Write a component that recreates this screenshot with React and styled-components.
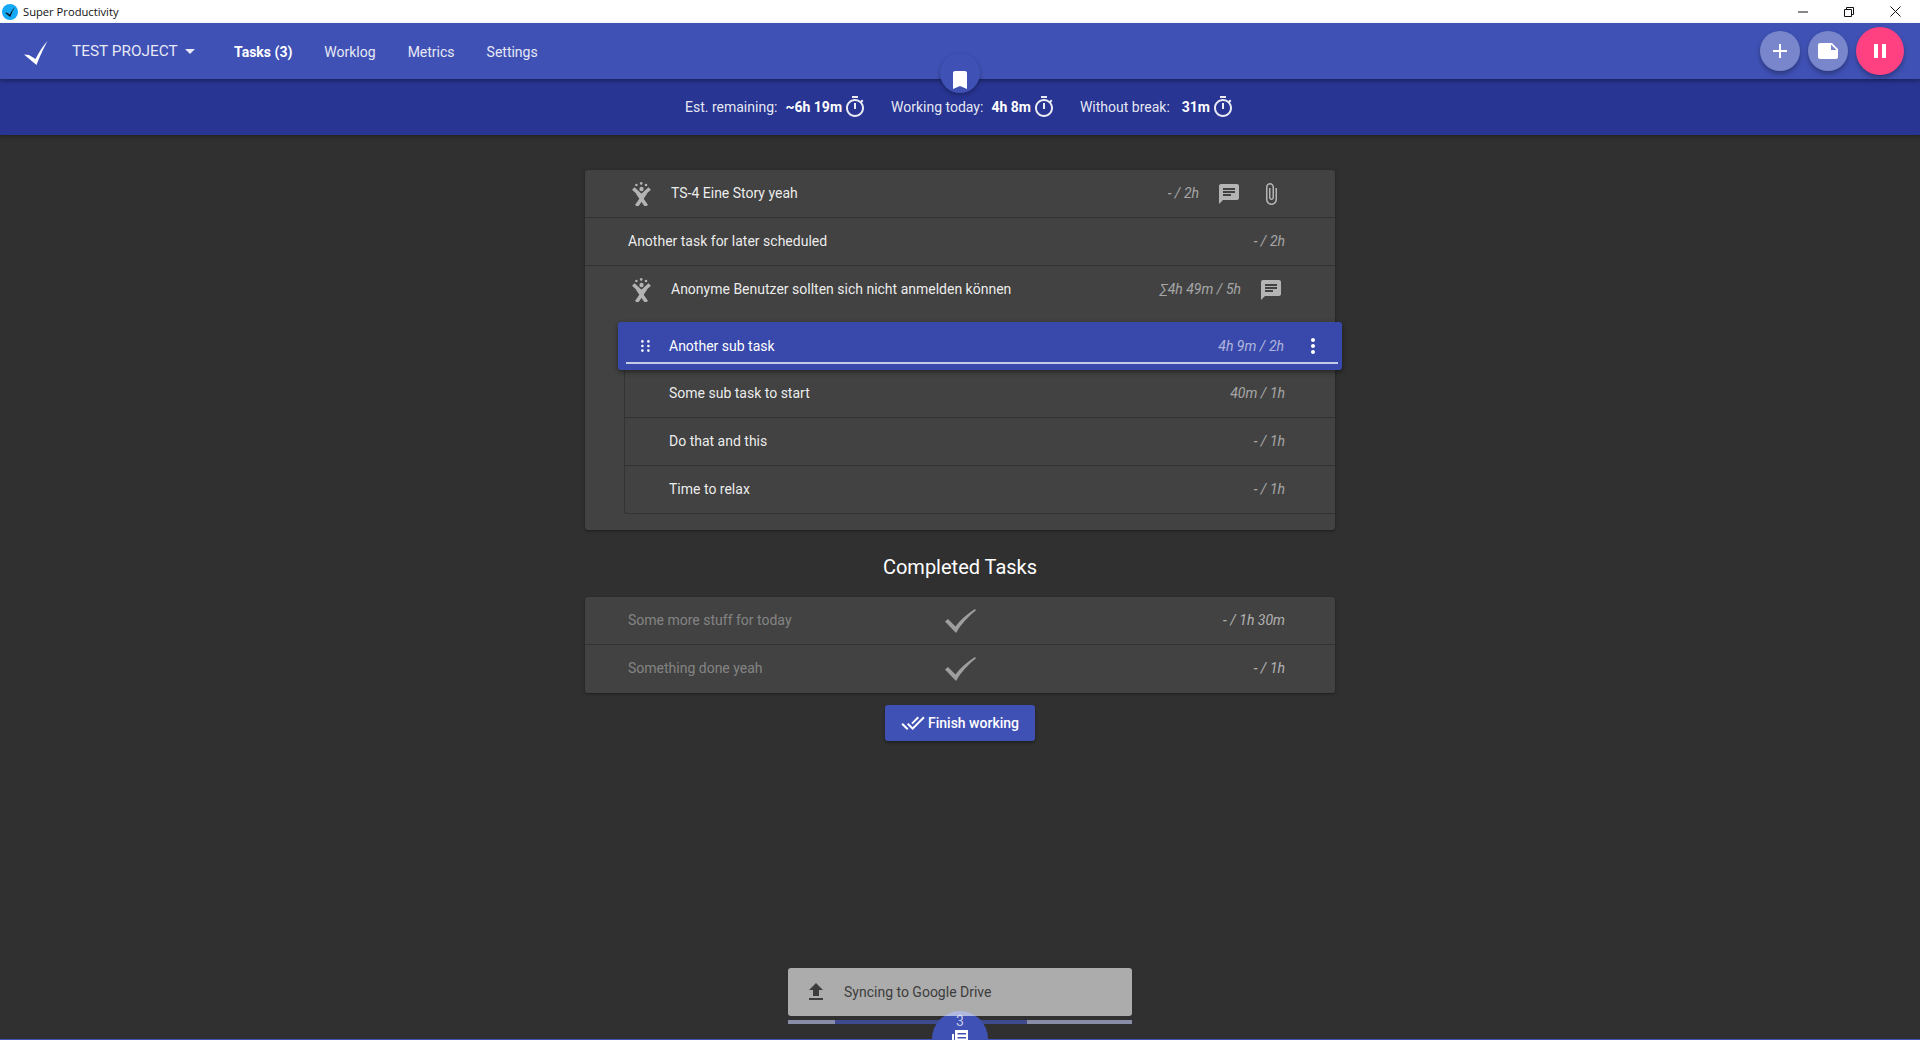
import styled, { createGlobalStyle } from 'styled-components';

const GlobalStyle = createGlobalStyle`
  html, body {
    margin: 0;
    padding: 0;
    height: 100%;
    background: #303030;
    overflow: hidden;
  }
  body {
    font-family: Roboto, "Liberation Sans", Arial, sans-serif;
    font-size: 14px;
    color: #fff;
  }
  * { box-sizing: border-box; }
`;

const paths = {
  add: 'M19 13h-6v6h-2v-6H5v-2h6V5h2v6h6v2z',
  note: 'M22 10l-6-6H4c-1.1 0-2 .9-2 2v12.01c0 1.1.9 1.99 2 1.99l16-.01c1.1 0 2-.89 2-1.99v-8zm-7-4.5l5.5 5.5H15V5.5z',
  pause: 'M6 19h4V5H6v14zm8-14v14h4V5h-4z',
  bookmark: 'M17 3H7c-1.1 0-1.99.9-1.99 2L5 21l7-3 7 3V5c0-1.1-.9-2-2-2z',
  timer: 'M15 1H9v2h6V1zm-4 13h2V8h-2v6zm8.03-6.61l1.42-1.42c-.43-.51-.9-.99-1.41-1.41l-1.42 1.42C16.07 4.74 14.12 4 12 4c-4.97 0-9 4.03-9 9s4.02 9 9 9 9-4.03 9-9c0-2.12-.74-4.07-1.97-5.61zM12 20c-3.87 0-7-3.13-7-7s3.13-7 7-7 7 3.13 7 7-3.13 7-7 7z',
  chat: 'M20 2H4c-1.1 0-1.99.9-1.99 2L2 22l4-4h14c1.1 0 2-.9 2-2V4c0-1.1-.9-2-2-2zM6 9h12v2H6V9zm8 5H6v-2h8v2zm4-6H6V6h12v2z',
  attach: 'M16.5 6v11.5c0 2.21-1.79 4-4 4s-4-1.79-4-4V5c0-1.38 1.12-2.5 2.5-2.5s2.5 1.12 2.5 2.5v10.5c0 .55-.45 1-1 1s-1-.45-1-1V6H10v9.5c0 1.38 1.12 2.5 2.5 2.5s2.5-1.12 2.5-2.5V5c0-2.21-1.79-4-4-4S7 2.79 7 5v12.5c0 3.04 2.46 5.5 5.5 5.5s5.5-2.46 5.5-5.5V6h-1.5z',
  more: 'M12 8c1.1 0 2-.9 2-2s-.9-2-2-2-2 .9-2 2 .9 2 2 2zm0 2c-1.1 0-2 .9-2 2s.9 2 2 2 2-.9 2-2-.9-2-2-2zm0 6c-1.1 0-2 .9-2 2s.9 2 2 2 2-.9 2-2-.9-2-2-2z',
  upload: 'M9 16h6v-6h4l-7-7-7 7h4v6zm-4 2h14v2H5z',
  doneAll: 'M18 7l-1.41-1.41-6.34 6.34 1.41 1.41L18 7zm4.24-1.41L11.66 16.17 7.48 12l-1.41 1.41L11.66 19l12-12-1.42-1.41zM.41 13.41L6 19l1.41-1.41L1.83 12 .41 13.41z',
  caret: 'M7 10l5 5 5-5z',
};

const Drawing = styled.svg`
  display: block;
  flex: none;
`;

const Icon = ({ name, size = 24 }) => (
  <Drawing width={size} height={size} viewBox="0 0 24 24" fill="currentColor">
    <path d={paths[name]} />
  </Drawing>
);

// the thin hand drawn tick of the app logo
const Tick = ({ size, color }) => (
  <Drawing width={size} height={size} viewBox="0 0 24 24" fill={color}>
    <path d="M0 13.5 L5 14 L11.5 18 C14.5 12 18.5 5.5 23.5 0 C19.5 7.5 15.5 15.5 12.5 24 Z" />
  </Drawing>
);

const DoneTick = () => (
  <Drawing width="31" height="24" viewBox="0 0 31 24" fill="#9e9e9e">
    <path d="M0 12.5 L3 10 L10.5 17.5 C15 11 22 5 30 0 L31 1.2 C23 7.5 16 15 11 24 Z" />
  </Drawing>
);

const JiraIcon = () => (
  <Drawing width="19" height="24" viewBox="0 0 19 24">
    <g fill="#b4b4b4">
      <circle cx="4.4" cy="3" r="1.3" />
      <circle cx="9.2" cy="1.4" r="1.3" />
      <circle cx="14" cy="3" r="1.3" />
      <circle cx="9.5" cy="7" r="2.2" />
    </g>
    <g fill="none" stroke="#b4b4b4" strokeWidth="3.6">
      <path d="M1.3 6.5 L9.5 14 L17.7 6.5" />
      <path d="M5.6 11 L14.5 24" />
      <path d="M13.4 11 L4.5 24" />
    </g>
  </Drawing>
);

const GripIcon = () => (
  <Drawing width="9" height="12" viewBox="0 0 9 12" fill="#fff">
    <circle cx="1.4" cy="1.4" r="1.3" />
    <circle cx="7.4" cy="1.4" r="1.3" />
    <circle cx="1.4" cy="6" r="1.3" />
    <circle cx="7.4" cy="6" r="1.3" />
    <circle cx="1.4" cy="10.6" r="1.3" />
    <circle cx="7.4" cy="10.6" r="1.3" />
  </Drawing>
);

const BacklogIcon = () => (
  <Drawing width="17" height="11" viewBox="0 0 17 11" fill="#fff">
    <path d="M0 4h2v7H0z" />
    <path fillRule="evenodd" d="M3 0h13v11H3zM5.5 3v1.6h8.5V3zM5.5 7v1.6h8.5V7z" />
  </Drawing>
);

const Page = styled.div`
  position: relative;
  height: 100vh;
  display: flex;
  flex-direction: column;
  overflow: hidden;
`;

const TitleBar = styled.div`
  height: 23px;
  flex: none;
  background: #fff;
  color: #111;
  display: flex;
  align-items: center;
  padding: 0 2px;
  font-family: "Open Sans", sans-serif;
  font-size: 11.2px;
`;

const AppDot = styled.span`
  width: 16px;
  height: 16px;
  border-radius: 50%;
  background: #14a8f5;
  display: flex;
  align-items: center;
  justify-content: center;
  margin-right: 5px;
`;

const WindowButtons = styled.div`
  margin-left: auto;
  display: flex;
`;

const WindowButton = styled.span`
  width: 46px;
  height: 20px;
  display: flex;
  align-items: center;
  justify-content: center;
`;

const Header = styled.header`
  position: relative;
  z-index: 2;
  height: 56px;
  flex: none;
  background: #3f51b5;
  display: flex;
  align-items: center;
  padding: 0 16px 0 24px;
  box-shadow: 0 2px 4px rgba(0, 0, 0, 0.35);
`;

const Logo = styled.span`
  margin-top: 3px;
`;

const ProjectName = styled.div`
  display: flex;
  align-items: center;
  margin-left: 24px;
  width: 162px;
  font-size: 15.4px;
  color: rgba(255, 255, 255, 0.88);
`;

const NavLink = styled.a`
  color: #fff;
  margin: 2px 32px 0 0;
  opacity: ${(p) => (p.$active ? 1 : 0.88)};
  font-weight: ${(p) => (p.$active ? 700 : 400)};
`;

const HeaderActions = styled.div`
  margin-left: auto;
  display: flex;
  align-items: center;
  gap: 8px;
`;

const RoundButton = styled.span`
  width: ${(p) => (p.$big ? 48 : 40)}px;
  height: ${(p) => (p.$big ? 48 : 40)}px;
  border-radius: 50%;
  display: flex;
  align-items: center;
  justify-content: center;
  color: #fff;
  background: ${(p) => (p.$big ? '#ff4081' : '#7986cb')};
  box-shadow: 0 3px 5px rgba(0, 0, 0, 0.3);
`;

const StatsBar = styled.div`
  position: relative;
  z-index: 1;
  height: 56px;
  flex: none;
  background: #283593;
  display: flex;
  align-items: center;
  justify-content: center;
  gap: 24px;
  box-shadow: 0 2px 4px rgba(0, 0, 0, 0.25);
`;

const Stat = styled.div`
  display: flex;
  align-items: center;
  gap: 1px;
  color: rgba(255, 255, 255, 0.9);
`;

const StatValue = styled.span`
  margin-left: ${(p) => p.$gap}px;
  color: #fff;
  font-weight: 700;
`;

const ToggleButton = styled.span`
  position: absolute;
  z-index: 3;
  left: 940px;
  top: 53px;
  width: 40px;
  height: 40px;
  padding-top: 15px;
  border-radius: 50%;
  background: #3f51b5;
  color: #fff;
  display: flex;
  justify-content: center;
  box-shadow: 0 2px 4px rgba(0, 0, 0, 0.3);
`;

const Main = styled.main`
  flex: 1;
  width: 750px;
  margin: 0 auto;
  padding-top: 35px;
`;

const Card = styled.div`
  background: #424242;
  border-radius: 3px;
  box-shadow: 0 1px 3px rgba(0, 0, 0, 0.4);
`;

const Row = styled.div`
  height: 48px;
  display: flex;
  align-items: center;
  padding: 0 ${(p) => (p.$icons ? 52 : 50)}px 0 ${(p) => (p.$story ? 47 : 43)}px;
  border-bottom: ${(p) => (p.$flat ? '0' : '1px solid #333')};
`;

const Title = styled.span`
  flex: 1;
  padding-bottom: 2px;
  margin-left: ${(p) => (p.$story ? 20 : 0)}px;
  color: rgba(255, 255, 255, 0.92);
`;

const Time = styled.span`
  padding-bottom: 2px;
  font-style: italic;
  color: rgba(255, 255, 255, 0.54);
`;

const ActionIcon = styled.span`
  margin-left: 18px;
  color: #b4b4b4;
`;

const SubSection = styled.div`
  padding: 8px 0 16px 39px;
`;

const ActiveRow = styled.div`
  position: relative;
  z-index: 1;
  height: 48px;
  margin: 0 -7px 0 -6px;
  padding: 0 17px 0 23px;
  display: flex;
  align-items: center;
  background: #3949ab;
  border-radius: 3px;
  box-shadow: 0 2px 5px rgba(0, 0, 0, 0.45);
`;

const Underline = styled.span`
  position: absolute;
  left: 8px;
  right: 4px;
  bottom: 6px;
  height: 2px;
  background: #c5cae9;
`;

const ActiveTitle = styled.span`
  flex: 1;
  margin-left: 19px;
  color: #fff;
`;

const ActiveTime = styled.span`
  font-style: italic;
  color: rgba(255, 255, 255, 0.6);
`;

const MoreButton = styled.span`
  margin-left: 17px;
  color: #fff;
`;

const SubList = styled.div`
  background: #424242;
  border-left: 1px solid #333;
  border-bottom: 1px solid #333;
  border-bottom-left-radius: 3px;
`;

const SubRow = styled.div`
  height: 48px;
  display: flex;
  align-items: center;
  padding: 0 50px 0 44px;
  border-bottom: 1px solid #333;
  &:last-child { border-bottom: 0; height: 47px; }
`;

const Heading = styled.h2`
  margin: 0;
  padding: 24px 0 17px;
  text-align: center;
  font-size: 20px;
  font-weight: 400;
  line-height: 26px;
  color: #fff;
`;

const DoneRow = styled.div`
  height: 48px;
  display: grid;
  grid-template-columns: 312px 40px 1fr;
  align-items: center;
  padding: 0 50px 0 43px;
  border-bottom: 1px solid #333;
  &:last-child { border-bottom: 0; }
`;

const DoneTitle = styled.span`
  padding-bottom: 2px;
  color: rgba(255, 255, 255, 0.36);
`;

const DoneCheck = styled.span`
  display: flex;
  justify-content: center;
`;

const DoneTime = styled(Time)`
  text-align: right;
  color: rgba(255, 255, 255, 0.6);
`;

const FinishRow = styled.div`
  display: flex;
  justify-content: center;
  padding-top: 12px;
`;

const FinishButton = styled.button`
  width: 150px;
  height: 36px;
  display: flex;
  align-items: center;
  justify-content: center;
  gap: 3px;
  border: 0;
  border-radius: 3px;
  padding: 0;
  background: #3f51b5;
  color: #fff;
  font: 500 14px Roboto, sans-serif;
  box-shadow: 0 2px 3px rgba(0, 0, 0, 0.35);
`;

const Snack = styled.div`
  position: absolute;
  z-index: 5;
  left: 788px;
  top: 968px;
  width: 344px;
  height: 48px;
  display: flex;
  align-items: center;
  padding-left: 16px;
  gap: 16px;
  background: rgba(255, 255, 255, 0.6);
  color: #3d3d3d;
  border-radius: 3px;
`;

const Progress = styled.div`
  position: absolute;
  z-index: 3;
  left: 788px;
  top: 1020px;
  width: 344px;
  height: 4px;
  background: #8a8da8;
`;

const ProgressValue = styled.div`
  height: 100%;
  margin-left: 47px;
  width: 192px;
  background: #3f4a8e;
`;

const BacklogButton = styled.div`
  position: absolute;
  z-index: 4;
  left: 932px;
  top: 1011px;
  width: 56px;
  height: 56px;
  padding-top: 3px;
  border-radius: 50%;
  background: #3f51b5;
  color: #c5cae9;
  display: flex;
  flex-direction: column;
  align-items: center;
  gap: 2px;
  font-size: 14px;
  line-height: 14px;
`;

const BottomLine = styled.div`
  height: 1px;
  flex: none;
  background: #3f51b5;
`;

const stats = [
  { label: 'Est. remaining:', value: '~6h 19m', gap: 7 },
  { label: 'Working today:', value: '4h 8m', gap: 7 },
  { label: 'Without break:', value: '31m', gap: 11 },
];

const App = () => (
  <Page>
    <GlobalStyle />
    <TitleBar>
      <AppDot><Tick size={10} color="#111" /></AppDot>
      Super Productivity
      <WindowButtons>
        <WindowButton>
          <svg width="10" height="10" viewBox="0 0 10 10"><path d="M0 5h10" stroke="#111" /></svg>
        </WindowButton>
        <WindowButton>
          <svg width="10" height="10" viewBox="0 0 10 10" fill="none" stroke="#111"><path d="M.5 2.5h7v7h-7zM2.5 2.5v-2h7v7h-2" /></svg>
        </WindowButton>
        <WindowButton>
          <svg width="11" height="11" viewBox="0 0 11 11" fill="none" stroke="#111"><path d="M.5.5l10 10M10.5.5l-10 10" /></svg>
        </WindowButton>
      </WindowButtons>
    </TitleBar>

    <Header>
      <Logo><Tick size={24} color="#fff" /></Logo>
      <ProjectName>TEST PROJECT <Icon name="caret" size={24} /></ProjectName>
      <NavLink $active>Tasks (3)</NavLink>
      <NavLink>Worklog</NavLink>
      <NavLink>Metrics</NavLink>
      <NavLink>Settings</NavLink>
      <HeaderActions>
        <RoundButton><Icon name="add" /></RoundButton>
        <RoundButton><Icon name="note" /></RoundButton>
        <RoundButton $big><Icon name="pause" /></RoundButton>
      </HeaderActions>
    </Header>

    <ToggleButton><Icon name="bookmark" /></ToggleButton>

    <StatsBar>
      {stats.map((s) => (
        <Stat key={s.label}>
          {s.label}
          <StatValue $gap={s.gap}>{s.value}</StatValue>
          <Icon name="timer" />
        </Stat>
      ))}
    </StatsBar>

    <Main>
      <Card>
        <Row $story $icons>
          <JiraIcon />
          <Title $story>TS-4 Eine Story yeah</Title>
          <Time>- / 2h</Time>
          <ActionIcon><Icon name="chat" /></ActionIcon>
          <ActionIcon><Icon name="attach" /></ActionIcon>
        </Row>
        <Row>
          <Title>Another task for later scheduled</Title>
          <Time>- / 2h</Time>
        </Row>
        <Row $story $icons $flat>
          <JiraIcon />
          <Title $story>Anonyme Benutzer sollten sich nicht anmelden können</Title>
          <Time>∑4h 49m / 5h</Time>
          <ActionIcon><Icon name="chat" /></ActionIcon>
        </Row>
        <SubSection>
          <ActiveRow>
            <GripIcon />
            <ActiveTitle>Another sub task</ActiveTitle>
            <ActiveTime>4h 9m / 2h</ActiveTime>
            <MoreButton><Icon name="more" /></MoreButton>
            <Underline />
          </ActiveRow>
          <SubList>
            <SubRow><Title>Some sub task to start</Title><Time>40m / 1h</Time></SubRow>
            <SubRow><Title>Do that and this</Title><Time>- / 1h</Time></SubRow>
            <SubRow><Title>Time to relax</Title><Time>- / 1h</Time></SubRow>
          </SubList>
        </SubSection>
      </Card>

      <Heading>Completed Tasks</Heading>

      <Card>
        <DoneRow>
          <DoneTitle>Some more stuff for today</DoneTitle>
          <DoneCheck><DoneTick /></DoneCheck>
          <DoneTime>- / 1h 30m</DoneTime>
        </DoneRow>
        <DoneRow>
          <DoneTitle>Something done yeah</DoneTitle>
          <DoneCheck><DoneTick /></DoneCheck>
          <DoneTime>- / 1h</DoneTime>
        </DoneRow>
      </Card>

      <FinishRow>
        <FinishButton><Icon name="doneAll" />Finish working</FinishButton>
      </FinishRow>
    </Main>

    <BacklogButton>
      3
      <BacklogIcon />
    </BacklogButton>
    <Progress><ProgressValue /></Progress>
    <Snack>
      <Icon name="upload" />
      Syncing to Google Drive
    </Snack>
    <BottomLine />
  </Page>
);

export default App;
